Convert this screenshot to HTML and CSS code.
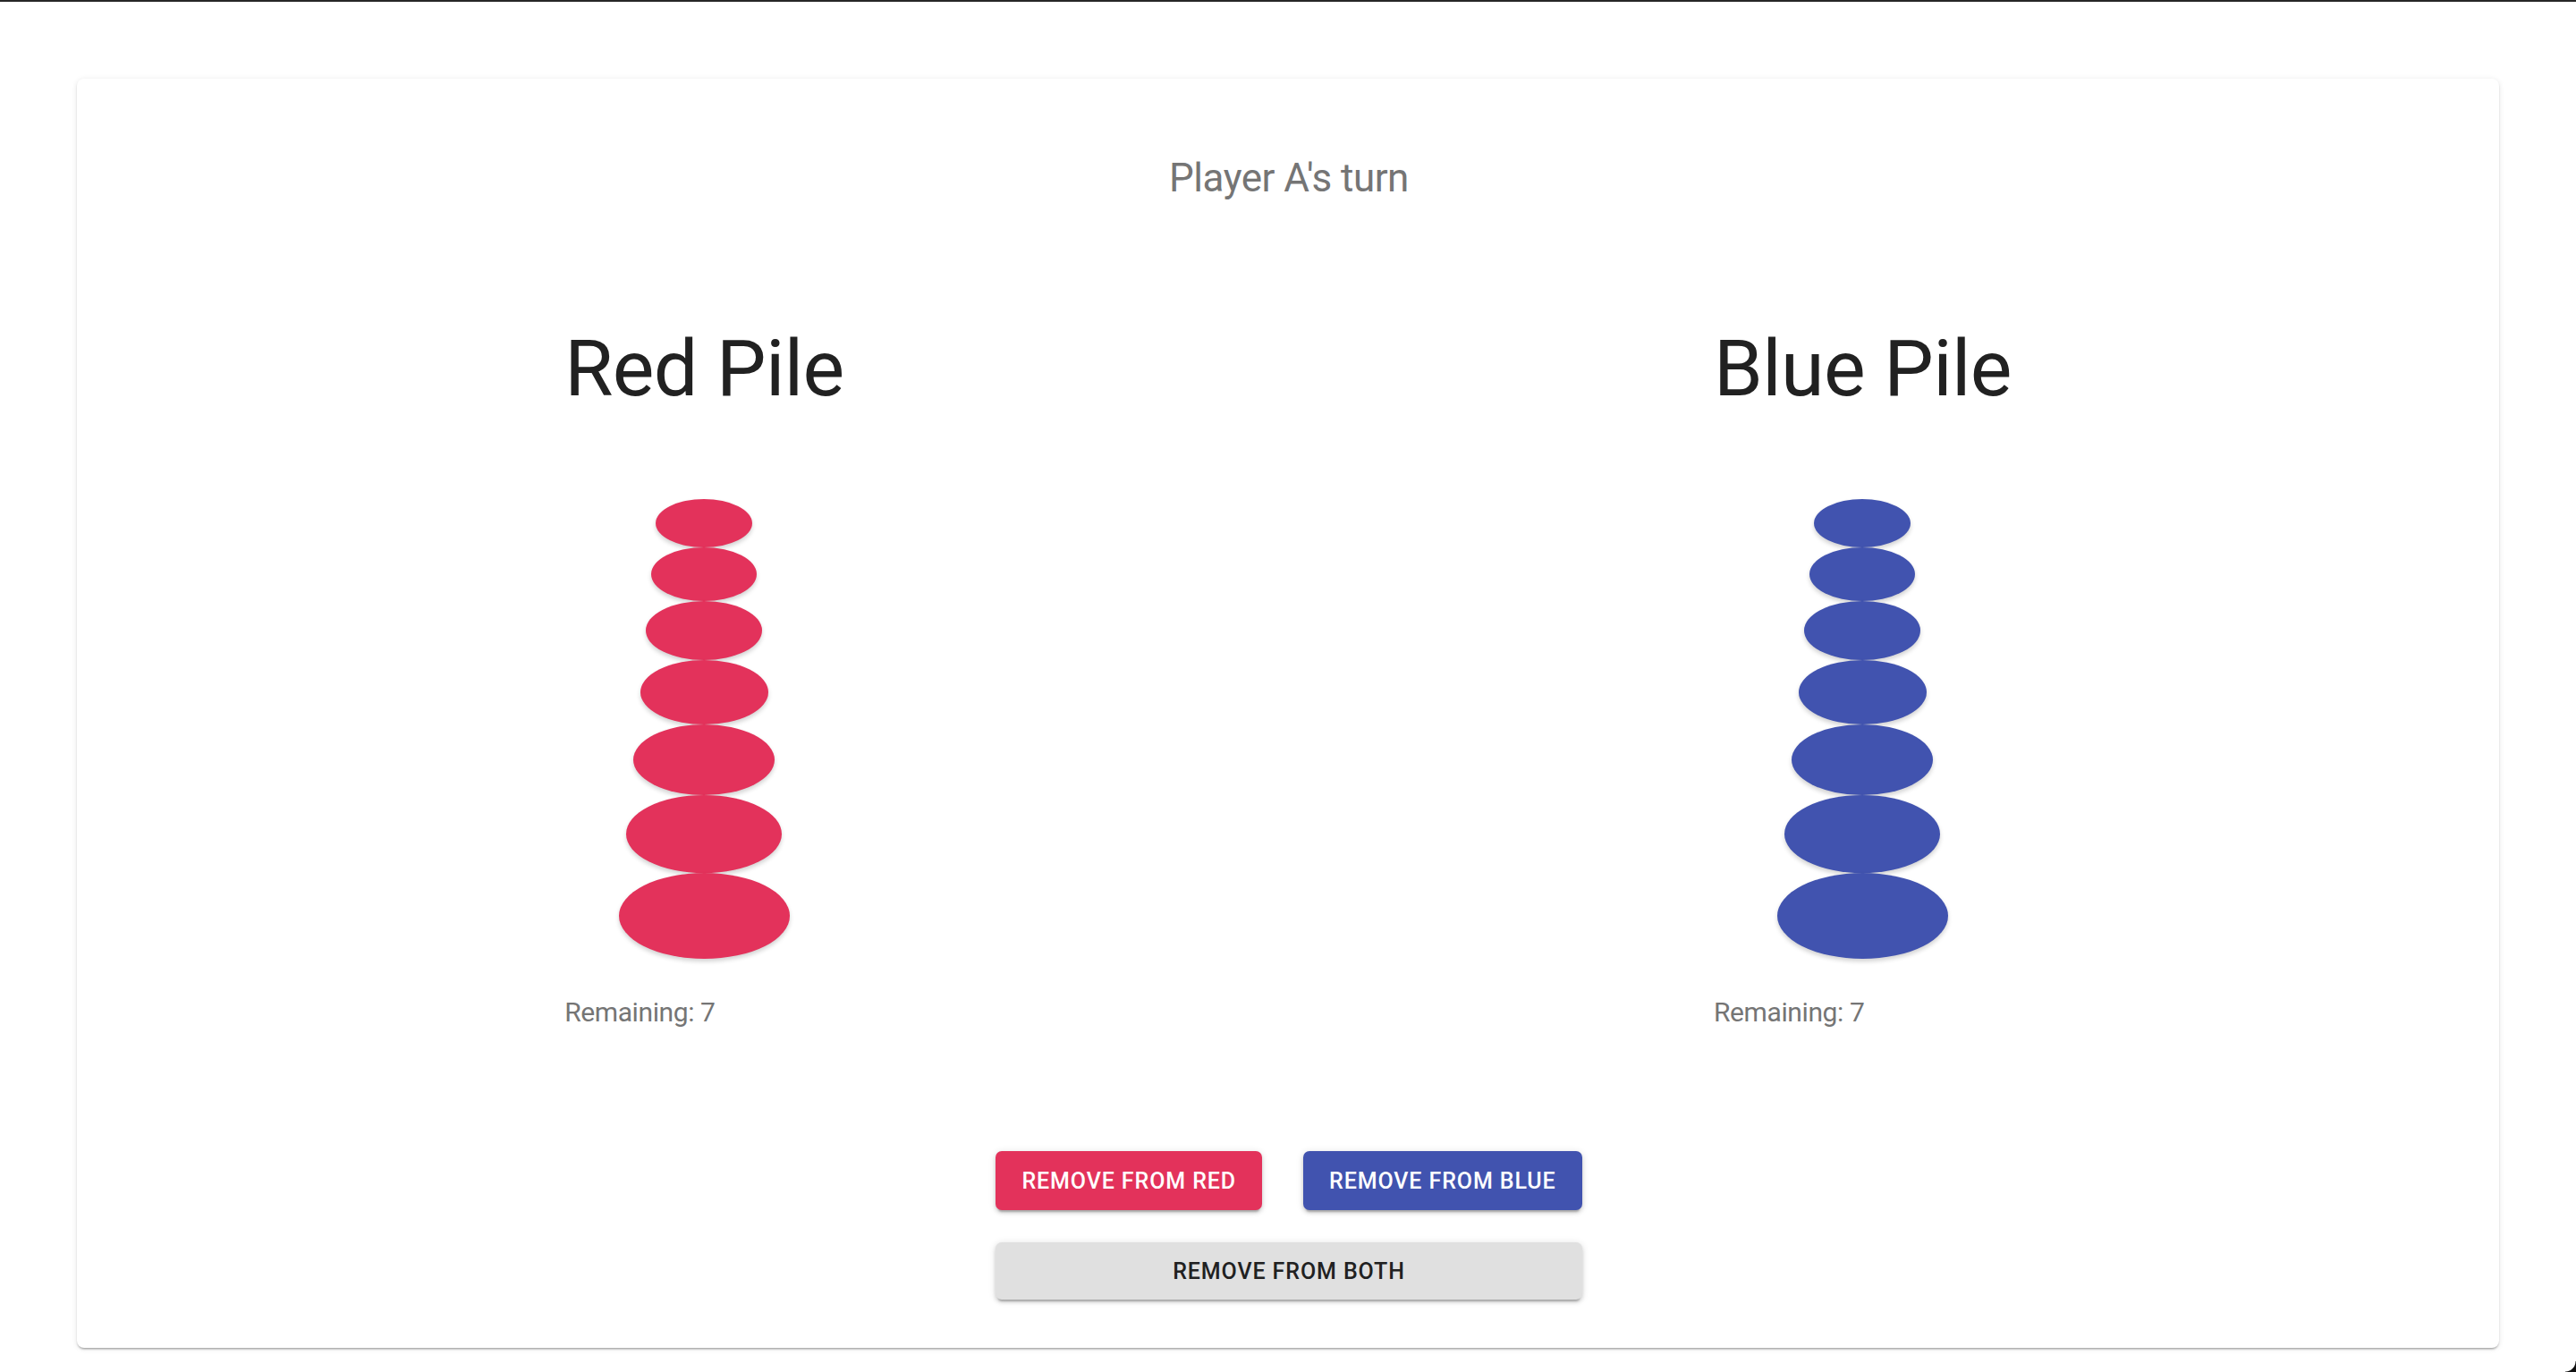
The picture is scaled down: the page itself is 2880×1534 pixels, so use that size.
FILE: index.html
```html
<!DOCTYPE html>
<html lang="en">
<head>
<meta charset="utf-8">
<title>Nim game</title>
<link rel="stylesheet" href="styles.css">
</head>
<body>
<div class="frame-top"></div>
<main class="card">
  <h2 class="turn">Player A's turn</h2>
  <section class="piles">
    <div class="pile">
      <h1 class="pile-title">Red Pile</h1>
      <div class="stack">
        <div class="stone red s1"></div>
        <div class="stone red s2"></div>
        <div class="stone red s3"></div>
        <div class="stone red s4"></div>
        <div class="stone red s5"></div>
        <div class="stone red s6"></div>
        <div class="stone red s7"></div>
      </div>
      <p class="remaining">Remaining: 7</p>
    </div>
    <div class="pile">
      <h1 class="pile-title">Blue Pile</h1>
      <div class="stack">
        <div class="stone blue s1"></div>
        <div class="stone blue s2"></div>
        <div class="stone blue s3"></div>
        <div class="stone blue s4"></div>
        <div class="stone blue s5"></div>
        <div class="stone blue s6"></div>
        <div class="stone blue s7"></div>
      </div>
      <p class="remaining">Remaining: 7</p>
    </div>
  </section>
  <div class="actions">
    <div class="action-row">
      <button class="btn btn-red">Remove from Red</button>
      <button class="btn btn-blue">Remove from Blue</button>
    </div>
    <button class="btn btn-grey">Remove from Both</button>
  </div>
</main>
<div class="window-corner"></div>
</body>
</html>
```
FILE: styles.css
```css
* { box-sizing: border-box; }

html, body {
  margin: 0;
  padding: 0;
  background: #ffffff;
  overflow: hidden;
}

body {
  font-family: Roboto, "Liberation Sans", Arial, sans-serif;
  height: 1534px;
  padding: 86px 86px 0;
}

.frame-top {
  position: fixed;
  left: 0;
  top: 0;
  right: 0;
  height: 2px;
  background: #262626;
}

.window-corner {
  position: fixed;
  right: 0;
  bottom: 0;
  width: 12px;
  height: 12px;
  background: radial-gradient(circle at 0 0, transparent 11px, #111 12px);
}

.card {
  margin-top: 2px;
  background: #fff;
  border-radius: 8px;
  box-shadow: 0 3px 2px -2px rgba(0,0,0,0.2), 0 2px 2px 0 rgba(0,0,0,0.14), 0 1px 6px 0 rgba(0,0,0,0.10);
  padding: 89px 59px 54px 59px;
  display: flex;
  flex-direction: column;
  align-items: stretch;
}

.turn {
  margin: 0 0 0 2px;
  font-size: 44px;
  letter-spacing: -0.5px;
  line-height: 1;
  font-weight: 400;
  color: #757575;
  text-align: center;
}

.piles {
  margin-top: 147px;
  display: flex;
  justify-content: space-around;
}

.pile {
  display: flex;
  flex-direction: column;
  align-items: flex-start;
}

.pile-title {
  margin: 0;
  font-size: 88px;
  letter-spacing: -0.6px;
  line-height: 1;
  font-weight: 400;
  color: #212121;
  white-space: nowrap;
}

.stack {
  align-self: stretch;
  margin-top: 102px;
  display: flex;
  flex-direction: column;
  align-items: center;
}

.stone {
  border-radius: 50%;
  box-shadow: 0 3px 5px rgba(0,0,0,0.18);
}

.red { background: #e3325b; }
.blue { background: #4153af; }

.s1 { width: 108px; height: 54px; }
.s2 { width: 118px; height: 60px; }
.s3 { width: 130px; height: 66px; }
.s4 { width: 143px; height: 72px; }
.s5 { width: 158px; height: 79px; }
.s6 { width: 174px; height: 87px; }
.s7 { width: 191px; height: 96px; }

.remaining {
  margin: 45px 0 0;
  font-size: 30px;
  letter-spacing: -0.4px;
  line-height: 1;
  color: #757575;
}

.actions {
  margin-top: 140px;
  margin-left: 2px;
  align-self: center;
  display: flex;
  flex-direction: column;
  gap: 36px;
}

.action-row {
  display: flex;
  gap: 46px;
}

.btn {
  font-family: Roboto, "Liberation Sans", Arial, sans-serif;
  font-size: 25px;
  font-weight: 500;
  letter-spacing: 0.9px;
  text-transform: uppercase;
  border: none;
  border-radius: 7px;
  height: 66px;
  padding: 0 29px;
  cursor: pointer;
  box-shadow: 0 5px 2px -3px rgba(0,0,0,0.2), 0 3px 4px 0 rgba(0,0,0,0.14), 0 1px 8px 0 rgba(0,0,0,0.12);
}

.btn-red { background: #e3325b; color: #fff; }
.btn-blue { background: #4153af; color: #fff; }
.btn-grey {
  background: #e0e0e0;
  color: #212121;
  height: 64px;
  width: 100%;
}
```
